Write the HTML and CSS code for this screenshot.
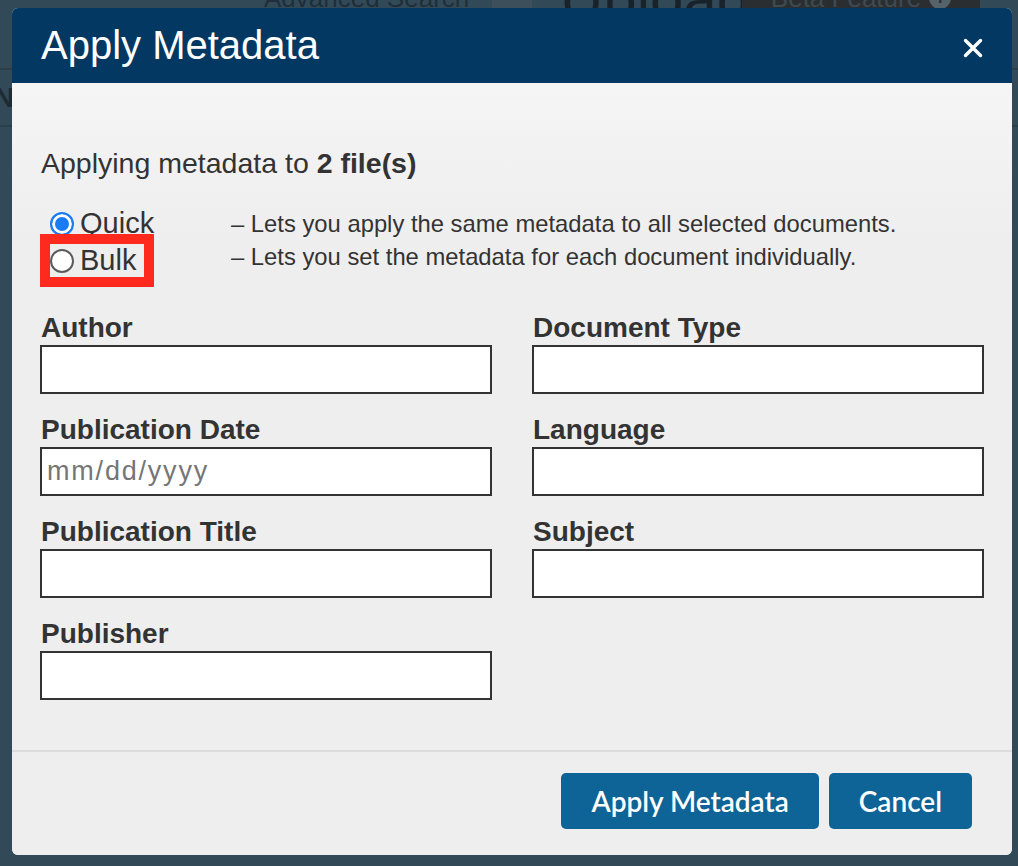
FILE: index.html
```html
<!DOCTYPE html>
<html lang="en">
<head>
    <meta charset="UTF-8">
    <title>Apply Metadata</title>
    <link rel="stylesheet" href="styles.css">
</head>
<body>
    <div class="page">
        <div class="topnav">
            <span class="nav-link">Advanced Search</span>
            <span class="nav-gap"></span>
            <span class="nav-upload">Upload</span>
            <span class="nav-beta">Beta Feature <span class="info-dot">i</span></span>
        </div>
        <div class="page-row"><span class="page-letter">N</span></div>
    </div>

    <div class="modal">
        <div class="modal-header">
            <h1 class="modal-title">Apply Metadata</h1>
            <svg class="close" width="20" height="20" viewBox="0 0 20 20">
                <path d="M2.5 2.5 L17.5 17.5 M17.5 2.5 L2.5 17.5" stroke="#fff" stroke-width="3.4" stroke-linecap="round"/>
            </svg>
        </div>

        <div class="modal-body">
            <p class="intro">Applying metadata to <b>2 file(s)</b></p>

            <div class="modes">
                <label class="mode">
                    <input type="radio" name="mode" class="radio" checked>Quick
                </label>
                <span class="mode-desc">&ndash; Lets you apply the same metadata to all selected documents.</span>
                <label class="mode">
                    <span class="marked"><input type="radio" name="mode" class="radio">Bulk</span>
                </label>
                <span class="mode-desc">&ndash; Lets you set the metadata for each document individually.</span>
            </div>

            <div class="fields">
                <div class="field">
                    <label class="field-label">Author</label>
                    <input type="text" class="field-input">
                </div>
                <div class="field">
                    <label class="field-label">Document Type</label>
                    <input type="text" class="field-input">
                </div>
                <div class="field">
                    <label class="field-label">Publication Date</label>
                    <input type="text" class="field-input" placeholder="mm/dd/yyyy">
                </div>
                <div class="field">
                    <label class="field-label">Language</label>
                    <input type="text" class="field-input">
                </div>
                <div class="field">
                    <label class="field-label">Publication Title</label>
                    <input type="text" class="field-input">
                </div>
                <div class="field">
                    <label class="field-label">Subject</label>
                    <input type="text" class="field-input">
                </div>
                <div class="field">
                    <label class="field-label">Publisher</label>
                    <input type="text" class="field-input">
                </div>
            </div>
        </div>

        <div class="modal-footer">
            <button class="btn">Apply Metadata</button>
            <button class="btn">Cancel</button>
        </div>
    </div>
</body>
</html>
```

FILE: styles.css
```css
body {
    margin: 0;
    height: 866px;
    overflow: hidden;
    background: #324a58;
    font-family: "Liberation Sans", Arial, sans-serif;
    color: #333;
}
.page {
    width: 1018px;
}
.topnav {
    display: flex;
    align-items: center;
    height: 40px;
    margin-top: -22px;
    color: #1f2e38;
    font-size: 26px;
}
.nav-link {
    margin-left: 264px;
    width: 228px;
}
.nav-gap {
    width: 40px;
    height: 40px;
    background: #3d4f5a;
}
.nav-upload {
    margin-left: 28px;
    font-size: 60px;
    width: 182px;
    color: #17222a;
}
.nav-beta {
    display: flex;
    align-items: center;
    justify-content: center;
    gap: 8px;
    width: 238px;
    height: 40px;
    background: #2b2e30;
    color: #3e4a52;
}
.info-dot {
    display: inline-block;
    width: 22px;
    height: 22px;
    border-radius: 50%;
    background: #56636b;
    color: #2b2e30;
    font-size: 16px;
    font-weight: bold;
    text-align: center;
    line-height: 22px;
}
.page-row {
    margin-top: 50px;
    height: 55px;
    border-top: 2px solid #2b3f4b;
    border-bottom: 2px solid #2b3f4b;
    display: flex;
    align-items: center;
}
.page-letter {
    margin-left: -6px;
    font-size: 28px;
    font-weight: bold;
    color: #1d2b34;
}

/* modal */
.modal {
    position: absolute;
    top: 8px;
    left: 12px;
    width: 1000px;
    height: 847px;
    border-radius: 6px;
    overflow: hidden;
    background: #eee;
    display: flex;
    flex-direction: column;
}
.modal-header {
    height: 75px;
    background: #033862;
    display: flex;
    align-items: center;
    justify-content: space-between;
    padding: 0 29px;
}
.modal-title {
    margin: 0;
    color: #fff;
    font-size: 40px;
    font-weight: normal;
}
.close {
    margin-top: 4px;
}
.modal-body {
    flex: 1;
    padding: 64px 28px 0;
    background: linear-gradient(#f5f5f5, #eeeeee 160px);
    border-bottom: 2px solid #dcdcdc;
}
.intro {
    margin: 0 0 0 1px;
    font-size: 28.5px;
    line-height: 32px;
}
.modes {
    display: grid;
    grid-template-columns: 191px auto;
    grid-auto-rows: 33px;
    margin-top: 28px;
    align-items: center;
}
.mode {
    display: flex;
    align-items: center;
    padding-left: 10px;
    font-size: 29px;
    color: #333;
}
.marked {
    display: flex;
    align-items: center;
    height: 33px;
    margin-top: 8px;
    padding-right: 8px;
    outline: 10px solid #fe2a1e;
}
.radio {
    appearance: none;
    width: 24px;
    height: 24px;
    margin: 0 6px 0 0;
    border: 2px solid #5a5a5a;
    border-radius: 50%;
    background: #fff;
}
.radio:checked {
    border-color: #1a7cf5;
    background: #1a7cf5;
    box-shadow: inset 0 0 0 3px #fff;
}
.mode-desc {
    font-size: 23.8px;
    color: #333;
}
.fields {
    display: grid;
    grid-template-columns: 452px 452px;
    column-gap: 40px;
    row-gap: 21px;
    margin-top: 40px;
}
.field {
    display: flex;
    flex-direction: column;
}
.field-label {
    font-size: 28px;
    font-weight: bold;
    line-height: 30px;
    padding-left: 1px;
    margin-bottom: 2px;
}
.field-input {
    height: 49px;
    box-sizing: border-box;
    border: 2px solid #333;
    background: #fff;
    padding: 0 5px;
    font-family: "Liberation Sans", Arial, sans-serif;
    font-size: 27px;
    color: #333;
}
.field-input::placeholder {
    color: #767676;
    letter-spacing: 1.8px;
}
.modal-footer {
    height: 103px;
    display: flex;
    justify-content: flex-end;
    align-items: flex-start;
    gap: 10px;
    padding: 21px 40px 0 0;
    box-sizing: border-box;
    background: #eee;
}
.btn {
    height: 56px;
    padding: 0 30px;
    border: none;
    border-radius: 5px;
    background: #0e6497;
    color: #fff;
    font-family: Lato, "Noto Sans", sans-serif;
    font-size: 28px;
    font-weight: 600;
    cursor: pointer;
}
```
